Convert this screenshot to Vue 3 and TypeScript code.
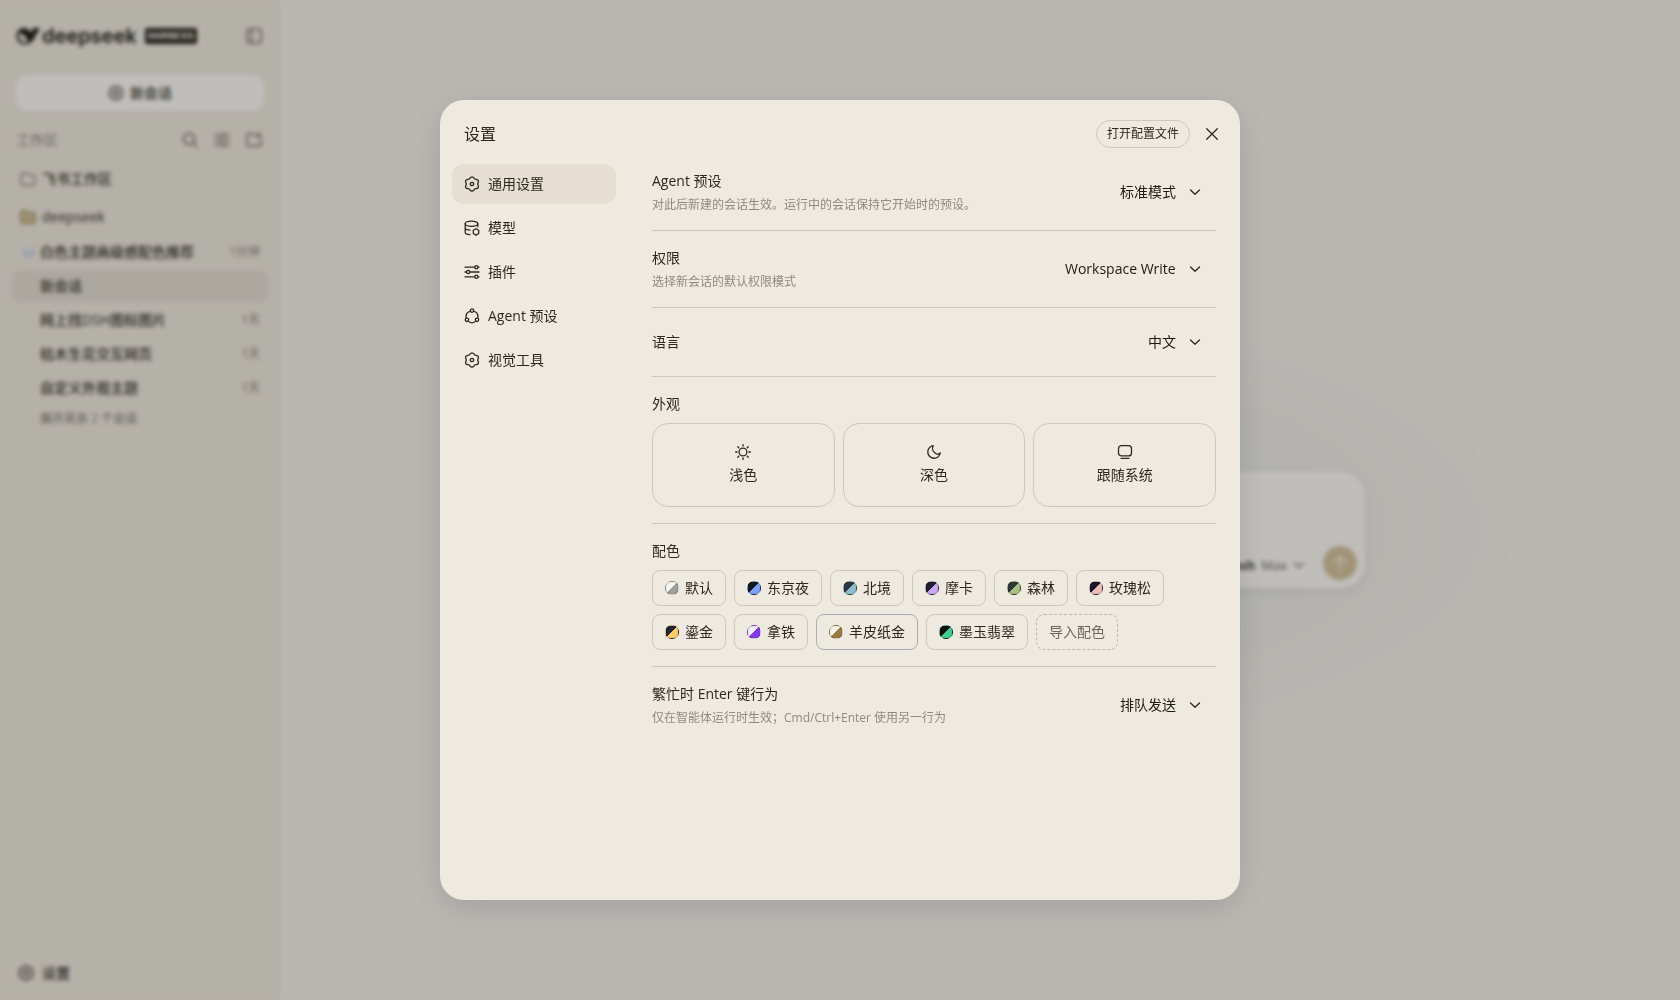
<script setup lang="ts">
import { ref } from 'vue'

interface Session { title: string; time: string; busy?: boolean }
interface NavItem { label: string; icon: string }
interface Scheme { name: string; dark: string; accent: string }

const sessions: Session[] = [
  { title: '白色主题高级感配色推荐', time: '1分钟', busy: true },
  { title: '新会话', time: '' },
  { title: '网上找DSH图标图片', time: '1天' },
  { title: '枯木生花交互网页', time: '1天' },
  { title: '自定义外观主题', time: '1天' },
]

const nav: NavItem[] = [
  { label: '通用设置', icon: 'gear' },
  { label: '模型', icon: 'model' },
  { label: '插件', icon: 'sliders' },
  { label: 'Agent 预设', icon: 'agent' },
  { label: '视觉工具', icon: 'gear' },
]

const appearances: NavItem[] = [
  { label: '浅色', icon: 'sun' },
  { label: '深色', icon: 'moon' },
  { label: '跟随系统', icon: 'screen' },
]

const schemes: Scheme[] = [
  { name: '默认', dark: '#f5f5f5', accent: '#9e9e9e' },
  { name: '东京夜', dark: '#16161e', accent: '#7aa2f7' },
  { name: '北境', dark: '#2e3440', accent: '#88c0d0' },
  { name: '摩卡', dark: '#1e1e2e', accent: '#cba6f7' },
  { name: '森林', dark: '#2d353b', accent: '#a7c080' },
  { name: '玫瑰松', dark: '#191724', accent: '#ebbcba' },
  { name: '鎏金', dark: '#1f2430', accent: '#ffcc66' },
  { name: '拿铁', dark: '#eff1f5', accent: '#8839ef' },
  { name: '羊皮纸金', dark: '#f5f2ea', accent: '#9a7b3f' },
  { name: '墨玉翡翠', dark: '#0f1115', accent: '#3ecf8e' },
]

const activeSession = ref('新会话')
const activeNav = ref('通用设置')
const activeScheme = ref('羊皮纸金')
const preset = ref('标准模式')
const permission = ref('Workspace Write')
const language = ref('中文')
const enterMode = ref('排队发送')
const draft = ref('')
</script>

<template>
  <div class="app">
    <svg class="defs" aria-hidden="true">
      <symbol id="gear" viewBox="0 0 16 16">
        <path d="M8 .8C9.600.8 10.070 2.610 10.850 3.060 11.630 3.510 13.440 3.010 14.240 4.400 15.040 5.790 13.700 7.100 13.700 8 13.700 8.900 15.040 10.210 14.240 11.600 13.440 12.990 11.630 12.490 10.850 12.940 10.070 13.390 9.600 15.200 8 15.200 6.400 15.200 5.930 13.390 5.150 12.940 4.370 12.490 2.560 12.990 1.760 11.600.96 10.210 2.300 8.900 2.300 8 2.300 7.100.96 5.790 1.760 4.400 2.560 3.010 4.370 3.510 5.150 3.060 5.930 2.610 6.400.8 8 .8z" />
        <circle cx="8" cy="8" r="1.700" />
      </symbol>
      <symbol id="model" viewBox="0 0 16 16">
        <ellipse cx="7.500" cy="3.700" rx="6.300" ry="2.600" />
        <path d="M1.200 3.700v8.500c0 1.200 2 2.300 4.800 2.400M13.800 3.700v3.100M1.200 7.800c.1 1.200 2 2.200 4.800 2.400" />
        <path d="M12 8.700l2.700 1.600v3.200L12 15.100l-2.700-1.600v-3.200z" />
      </symbol>
      <symbol id="sliders" viewBox="0 0 16 16">
        <path d="M1 3.200h9.600M14.200 3.200h.8M1 8h1.400M6 8h9M1 12.800h9.600M14.200 12.800h.8" />
        <circle cx="12.400" cy="3.200" r="1.600" /><circle cx="4.200" cy="8" r="1.600" /><circle cx="12.400" cy="12.800" r="1.600" />
      </symbol>
      <symbol id="agent" viewBox="0 0 16 16">
        <circle cx="8" cy="2.600" r="1.700" /><circle cx="3" cy="11.800" r="1.700" /><circle cx="13" cy="11.800" r="1.700" />
        <path d="M5.400 3.500C3 4.500 1.700 6.800 2.200 9.400M10.600 3.500c2.400 1 3.700 3.300 3.200 5.900M5 13.800c1.800 1.200 4.200 1.200 6 0" />
      </symbol>
      <symbol id="sun" viewBox="0 0 16 16">
        <circle cx="8" cy="8" r="3.900" />
        <path d="M8 .6v1.500M8 13.900v1.500M.6 8h1.500M13.900 8h1.500M2.800 2.800l.9.9M12.300 12.300l.9.9M2.800 13.200l.9-.9M12.300 3.700l.9-.9" />
      </symbol>
      <symbol id="moon" viewBox="0 0 16 16">
        <path d="M7.300 1.700a6.300 6.300 0 1 0 7 7.300 3.700 3.700 0 0 1-5.900-.7c-1.900-1.300-2.400-4.300-1.100-6.600z" />
      </symbol>
      <symbol id="screen" viewBox="0 0 16 16">
        <rect x="1.500" y="1.700" width="13" height="10.200" rx="3" /><path d="M4 14.300h8" />
      </symbol>
      <symbol id="folder" viewBox="0 0 16 16">
        <path d="M1.200 12V4a2 2 0 0 1 2-2h2.300c1.500 0 1.500 2 3 2h4.300a2 2 0 0 1 2 2v6a2 2 0 0 1-2 2H3.200a2 2 0 0 1-2-2z" />
      </symbol>
      <symbol id="chevron" viewBox="0 0 12 12"><path d="M1.500 4 6 8.300 10.500 4" /></symbol>
    </svg>

    <aside class="sidebar">
      <header class="brand">
        <svg class="whale" viewBox="0 0 24 18" aria-hidden="true">
          <path d="M.5 9C.5 4.500 4 1 8.500 1c2 0 3.500 1 5 3l1.500 2c.6-2.500 1-4.500 3-5 1.500-.2 4 .3 5.500 0-.3 3-1.500 5-3.500 5.800-.8 4-2.500 6.200-4.500 8C13.500 17 11.500 17.500 9 17.500 4 17.500.5 13.500.5 9z" />
          <path class="belly" d="M2.500 7c2.500-1.200 5 .3 6.800 3 1.500 2.200 3.200 3.700 2.700 5.200C7.500 17 2 13 2.500 7z" />
        </svg>
        <span class="wordmark">deepseek</span>
        <span class="badge">HARNESS</span>
        <button class="plain collapse" aria-label="收起侧栏">
          <svg class="icon" viewBox="0 0 16 16"><rect x="1" y="1" width="14" height="14" rx="3" /><path d="M5.500 1v14" /></svg>
        </button>
      </header>

      <button class="new-chat">
        <svg class="icon" viewBox="0 0 16 16"><circle cx="8" cy="8" r="6.500" /><path d="M8 5.200v5.600M5.200 8h5.600" /></svg>
        新会话
      </button>

      <div class="group-head">
        <span>工作区</span>
        <button class="plain" aria-label="搜索"><svg class="icon" viewBox="0 0 16 16"><circle cx="7" cy="7" r="5.500" /><path d="m11 11 4 4" /></svg></button>
        <button class="plain" aria-label="筛选"><svg class="icon" viewBox="0 0 16 16"><path d="M1 3h7M12 3h3M1 8h3M8 8h7M1 13h7M12 13h3M10 1v4M6 6v4M10 11v4" /></svg></button>
        <button class="plain" aria-label="新建工作区"><svg class="icon" viewBox="0 0 16 16"><path d="M9 3H7L5.500 1.500H3a2 2 0 0 0-2 2V12a2 2 0 0 0 2 2h10a2 2 0 0 0 2-2V8M13 1v5M10.500 3.500h5" /></svg></button>
      </div>

      <a class="workspace" href="#feishu"><svg class="icon faint"><use href="#folder" /></svg>飞书工作区</a>
      <a class="workspace" href="#deepseek"><svg class="icon gold" viewBox="0 0 16 16"><use href="#folder" /><path d="M4.500 9h7" /></svg>deepseek</a>

      <nav class="sessions" aria-label="会话">
        <a v-for="s in sessions" :key="s.title" href="#session" class="session" :class="{ active: s.title === activeSession }" @click.prevent="activeSession = s.title">
          <span class="mark"><i v-if="s.busy" class="spinner"></i></span>
          <span class="name">{{ s.title }}</span>
          <time>{{ s.time }}</time>
        </a>
      </nav>
      <button class="plain more">展开其余 2 个会话</button>
      <button class="plain prefs"><svg class="icon"><use href="#gear" /></svg>设置</button>
    </aside>

    <main class="main">
      <form class="composer" @submit.prevent>
        <textarea v-model="draft" aria-label="消息"></textarea>
        <div class="composer-bar">
          <button type="button" class="plain engine"><b>Flash</b><span>Max</span><svg class="icon small"><use href="#chevron" /></svg></button>
          <button type="submit" class="send" aria-label="发送"><svg class="icon" viewBox="0 0 16 16"><path d="M8 15V1.500M2.500 7 8 1.500 13.500 7" /></svg></button>
        </div>
      </form>
    </main>

    <div class="overlay">
      <section class="dialog" role="dialog" aria-modal="true" aria-labelledby="dialog-title">
        <header class="dialog-head">
          <h1 id="dialog-title">设置</h1>
          <button class="config">打开配置文件</button>
          <button class="plain close" aria-label="关闭"><svg class="icon small" viewBox="0 0 12 12"><path d="m.7.7 10.600 10.600M11.300.7.7 11.300" /></svg></button>
        </header>
        <div class="dialog-body">
          <nav class="tabs" aria-label="设置分类">
            <button v-for="n in nav" :key="n.label" class="tab" :class="{ active: n.label === activeNav }" @click="activeNav = n.label">
              <svg class="icon"><use :href="'#' + n.icon" /></svg>{{ n.label }}
            </button>
          </nav>

          <div class="panel">
            <div class="row">
              <div class="text"><label for="preset">Agent 预设</label><p>对此后新建的会话生效。运行中的会话保持它开始时的预设。</p></div>
              <div class="picker"><select id="preset" v-model="preset"><option>标准模式</option></select><svg class="icon small"><use href="#chevron" /></svg></div>
            </div>
            <div class="row">
              <div class="text"><label for="permission">权限</label><p>选择新会话的默认权限模式</p></div>
              <div class="picker"><select id="permission" v-model="permission"><option>Workspace Write</option></select><svg class="icon small"><use href="#chevron" /></svg></div>
            </div>
            <div class="row">
              <div class="text"><label for="language">语言</label></div>
              <div class="picker"><select id="language" v-model="language"><option>中文</option></select><svg class="icon small"><use href="#chevron" /></svg></div>
            </div>
            <div class="block">
              <h2>外观</h2>
              <div class="cards">
                <button v-for="a in appearances" :key="a.label" class="card">
                  <svg class="icon"><use :href="'#' + a.icon" /></svg>{{ a.label }}
                </button>
              </div>
            </div>
            <div class="block">
              <h2>配色</h2>
              <div class="chips">
                <button v-for="c in schemes" :key="c.name" class="chip" :class="{ active: c.name === activeScheme }" @click="activeScheme = c.name">
                  <span class="swatch" :style="{ background: `linear-gradient(135deg, ${c.dark} 50%, ${c.accent} 50%)` }"></span>{{ c.name }}
                </button>
                <button class="chip import">导入配色</button>
              </div>
            </div>
            <div class="row">
              <div class="text"><label for="enter">繁忙时 Enter 键行为</label><p>仅在智能体运行时生效；Cmd/Ctrl+Enter 使用另一行为</p></div>
              <div class="picker"><select id="enter" v-model="enterMode"><option>排队发送</option></select><svg class="icon small"><use href="#chevron" /></svg></div>
            </div>
          </div>
        </div>
      </section>
    </div>
  </div>
</template>

<style>
body { margin: 0; }
</style>

<style scoped>
.app {
  display: flex;
  min-height: 100vh;
  background: #f6f4ee;
  color: #2b2822;
  font: 14px/22px "Open Sans", "Noto Sans CJK SC", sans-serif;
}
.app *, .app *::before { box-sizing: border-box; }
.defs { position: absolute; width: 0; height: 0; }
button, select, textarea { font: inherit; color: inherit; }
button { cursor: pointer; }
a { color: inherit; text-decoration: none; }
.icon { flex: none; width: 16px; height: 16px; fill: none; stroke: currentColor; stroke-width: 1.3; stroke-linecap: round; stroke-linejoin: round; }
.icon.small { width: 12px; height: 12px; }
.plain { display: flex; align-items: center; padding: 0; border: 0; background: none; }

.sidebar { display: flex; flex-direction: column; flex: none; width: 280px; padding: 16px 12px 12px; background: #f1ece2; color: #3a372f; font-weight: 500; }
.sidebar .icon { stroke-width: 1.5; }
.brand { display: flex; align-items: center; height: 40px; padding: 0 4px; color: #1f1d18; }
.whale { width: 24px; height: 18px; fill: currentColor; }
.belly { fill: #f1ece2; }
.wordmark { margin-left: 2px; font: 600 20px/24px Inter, sans-serif; }
.badge { margin-left: 8px; padding: 0 3px; border-radius: 2px; background: #2b2822; color: #f1ece2; font: bold 11px/16px "Liberation Mono", monospace; }
.collapse { margin: 0 2px 0 auto; color: #6b675f; }
.new-chat { display: flex; align-items: center; justify-content: center; gap: 6px; height: 36px; margin: 19px 4px 0; border: 0; border-radius: 12px; background: #fffefa; }
.group-head { display: flex; align-items: center; gap: 16px; height: 34px; margin-top: 12px; padding: 0 6px 0 4px; color: #8a857b; font-weight: 400; }
.group-head span { flex: 1; }
.group-head button { color: #6b675f; }
.workspace { display: flex; align-items: center; gap: 6px; height: 38px; padding: 0 8px; margin-top: 3px; }
.workspace + .workspace { margin-top: 0; }
.faint { color: #8a857b; }
.gold { color: #97783b; fill: #e3d5b6; }
.sessions { display: flex; flex-direction: column; gap: 2px; }
.session { display: flex; align-items: center; gap: 6px; height: 32px; padding: 0 8px; border-radius: 8px; }
.session.active { background: #e6e0d6; }
.mark { display: flex; justify-content: flex-end; width: 14px; }
.spinner { width: 10px; height: 10px; border: 2px solid #a9bff2; border-top-color: transparent; border-radius: 50%; }
.name { flex: 1; }
time { color: #8a857b; font-size: 12px; font-weight: 400; }
.more { height: 30px; padding-left: 28px; color: #8a857b; font-size: 12px; }
.prefs { gap: 8px; height: 30px; margin-top: auto; padding-left: 6px; }

.main { display: flex; flex: 1; align-items: center; justify-content: center; padding: 60px 24px 0; background: radial-gradient(ellipse 540px 225px at 50% 53%, #ecedec 50%, #f0efea 70%, #f4f1eb 84%, #f6f4ee); }
.composer { display: flex; flex-direction: column; width: 770px; height: 116px; padding: 8px; border-radius: 24px; background: #fffefa; box-shadow: 0 4px 12px rgba(0, 0, 0, .06); }
textarea { flex: 1; padding: 8px; border: 0; background: none; resize: none; outline: 0; }
.composer-bar { display: flex; align-items: flex-end; justify-content: flex-end; gap: 18px; }
.engine { gap: 6px; height: 30px; color: #6b675f; font-size: 13px; font-weight: 500; }
.engine b { color: #4a463e; }
.send { display: flex; align-items: center; justify-content: center; width: 34px; height: 34px; border: 0; border-radius: 50%; background: #d8c5a0; color: #fffefa; }

.overlay { position: fixed; inset: 0; display: flex; align-items: center; justify-content: center; background: rgba(0, 0, 0, .25); backdrop-filter: blur(2px); }
.dialog { display: flex; flex-direction: column; width: min(800px, 94vw); height: min(800px, 94vh); border-radius: 24px; background: #eeeadf; box-shadow: 0 8px 32px rgba(0, 0, 0, .12); overflow: hidden; }
.dialog-head { display: flex; align-items: center; gap: 8px; padding: 20px 14px 6px 24px; }
h1 { flex: 1; margin: 0; font-size: 16px; line-height: 24px; font-weight: 400; }
.config { height: 28px; padding: 0 10px; border: 1px solid #cdc8bd; border-radius: 14px; background: none; font-size: 12px; line-height: 18px; }
.close { justify-content: center; width: 28px; height: 28px; }
.dialog-body { display: flex; flex: 1; gap: 36px; min-height: 0; padding: 0 24px 0 12px; }
.tabs { display: flex; flex: none; flex-direction: column; gap: 4px; width: 164px; padding-top: 10px; }
.tab { display: flex; align-items: center; gap: 8px; height: 40px; padding: 0 12px; border: 0; border-radius: 12px; background: none; }
.tab.active { background: #e6ded1; }
.panel { flex: 1; min-width: 0; overflow: auto; }
.row { display: flex; align-items: center; justify-content: space-between; padding: 16px 0; border-bottom: 1px solid #cdc8bd; }
.row:last-child { border-bottom: 0; }
label { display: block; }
p { margin: 4px 0 0; color: #8f8a7f; font-size: 12px; line-height: 18px; }
.picker { position: relative; display: flex; align-items: center; }
select { height: 36px; padding: 0 40px 0 12px; border: 0; border-radius: 12px; background: none; color: #1c1a16; appearance: none; outline: 0; }
.picker .icon { position: absolute; right: 15px; pointer-events: none; }
.block { padding: 16px 0; border-bottom: 1px solid #cdc8bd; }
h2 { margin: 0 0 8px; font-size: 14px; line-height: 22px; font-weight: 400; }
.cards { display: grid; grid-template-columns: repeat(3, 1fr); gap: 8px; }
.card { display: flex; flex-direction: column; align-items: center; justify-content: center; gap: 4px; height: 84px; border: 1px solid #cdc8bd; border-radius: 16px; background: none; }
.chips { display: flex; flex-wrap: wrap; gap: 8px; }
.chip { display: flex; align-items: center; gap: 6px; height: 36px; padding: 0 12px; border: 1px solid #cdc8bd; border-radius: 8px; background: none; }
.chip.active { border-color: #a9adb5; }
.chip.import { border-style: dashed; border-color: #bdb8ad; color: #6b675f; }
.swatch { width: 14px; height: 14px; border: 1px solid rgba(0, 0, 0, .2); border-radius: 50%; }
</style>
